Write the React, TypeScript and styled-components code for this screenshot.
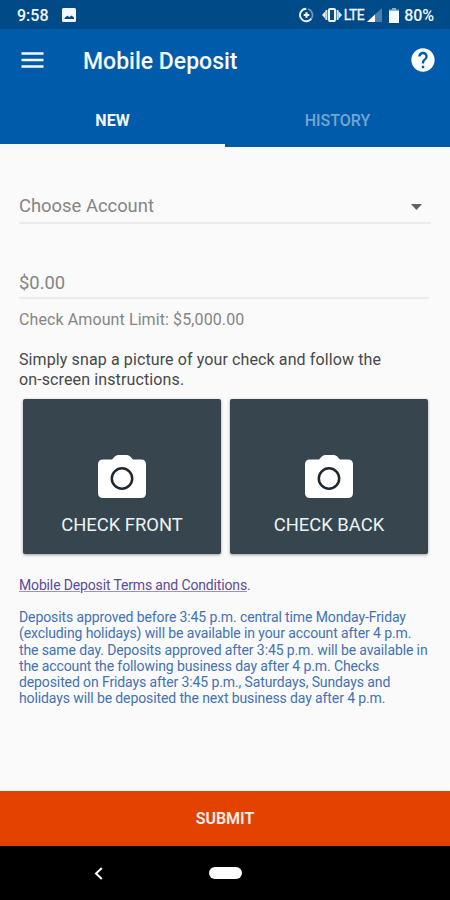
import React from "react";
import styled, { createGlobalStyle } from "styled-components";

const GlobalStyle = createGlobalStyle`
  * { box-sizing: border-box; }
  body { margin: 0; background: #fafafa; font-family: Roboto, "Liberation Sans", sans-serif; }
  button { font-family: inherit; border: 0; padding: 0; background: none; cursor: pointer; }
  svg { display: block; flex: none; }
`;

const Screen = styled.div`
  width: 450px;
  height: 900px;
  display: flex;
  flex-direction: column;
  overflow: hidden;
  background: #fafafa;
`;

const StatusBar = styled.div`
  height: 29px;
  flex: none;
  display: flex;
  align-items: center;
  padding: 1px 16px 0 17px;
  background: #004b87;
  color: #f3f8ff;
  font-size: 16px;
  font-weight: 500;
`;

const Clock = styled.span`
  width: 45px;
  letter-spacing: 0;
`;

const StatusIcons = styled.div`
  margin-left: auto;
  display: flex;
  align-items: center;
`;

const VibrateSlot = styled.span`
  margin-left: 8px;
`;

const Network = styled.span`
  margin: 0 3px 0 2px;
  font-size: 14px;
  font-weight: 400;
  letter-spacing: -0.5px;
  -webkit-text-stroke: 0.3px currentColor;
`;

const BatterySlot = styled.span`
  margin-left: 7px;
`;

const BatteryLevel = styled.span`
  margin-left: 5px;
  letter-spacing: -0.1px;
`;

const Header = styled.header`
  flex: none;
  height: 118px;
  background: #005cab;
  color: #f7faff;
  display: flex;
  flex-direction: column;
`;

const Toolbar = styled.div`
  height: 65px;
  display: flex;
  align-items: center;
  padding: 0 13px 3px 21px;
`;

const Title = styled.h1`
  margin: 3px auto 0 39px;
  font-size: 23px;
  line-height: 30px;
  font-weight: 500;
`;

const Tabs = styled.div`
  flex: 1;
  display: grid;
  grid-template-columns: 1fr 1fr;
`;

const Tab = styled.button<{ $active?: boolean }>`
  padding-top: 2px;
  font-size: 16px;
  font-weight: ${(p) => (p.$active ? 700 : 500)};
  color: ${(p) => (p.$active ? "#f3f8ff" : "#73a5d3")};
  border-bottom: 3px solid ${(p) => (p.$active ? "#f5f8fc" : "#005cab")};
`;

const Content = styled.main`
  flex: 1;
  display: flex;
  flex-direction: column;
  padding: 40px 21px 0 19px;
`;

const Field = styled.div<{ $wide?: boolean }>`
  height: ${(p) => (p.$wide ? 37 : 36)}px;
  margin-right: ${(p) => (p.$wide ? -2 : 0)}px;
  display: flex;
  align-items: center;
  justify-content: space-between;
  padding: ${(p) => (p.$wide ? 1 : 5)}px 9px 0 0;
  border-bottom: 2px solid #ebebeb;
  color: #858585;
  font-size: 18.4px;
`;

const DropdownArrow = styled.svg`
  margin-top: 3px;
`;

const FieldGap = styled.div`
  height: 39px;
`;

const Limit = styled.div`
  margin-top: 11px;
  font-size: 16px;
  line-height: 20px;
  letter-spacing: 0.1px;
  color: #858585;
`;

const Instructions = styled.p`
  margin: 20px 0 0;
  font-size: 16px;
  line-height: 20px;
  color: #484848;
`;

const Captures = styled.div`
  display: grid;
  grid-template-columns: 198px 198px;
  gap: 9px;
  margin: 9px 0 0 4px;
`;

const Capture = styled.button`
  height: 155px;
  display: flex;
  flex-direction: column;
  align-items: center;
  padding-top: 56px;
  border-radius: 2px;
  background: #37464e;
  box-shadow: 0 1px 3px rgba(0, 0, 0, 0.38);
  color: #edf3f5;
  font-size: 18.4px;
  line-height: 24px;
`;

const CaptureLabel = styled.span`
  margin-top: 15px;
`;

const Terms = styled.div`
  margin-top: 23px;
  font-size: 14px;
  line-height: 16px;
  letter-spacing: -0.15px;
  color: #5b4b9b;

  a {
    color: inherit;
    text-decoration: underline;
    text-decoration-color: #9a93c3;
  }
`;

const Notice = styled.p`
  margin: 16px 0 0;
  font-size: 14px;
  line-height: 16.3px;
  color: #4272b4;
`;

const Line = styled.span<{ $spacing: number }>`
  display: block;
  white-space: nowrap;
  letter-spacing: ${(p) => p.$spacing}px;
`;

const Submit = styled.button`
  flex: none;
  height: 55px;
  background: #e34200;
  color: #fff0ea;
  font-size: 16px;
  font-weight: 600;
  letter-spacing: -0.05px;
`;

const NavBar = styled.nav`
  flex: none;
  height: 54px;
  display: flex;
  align-items: center;
  background: #000;
`;

const BackIcon = styled.svg`
  margin-left: 94px;
`;

const HomePill = styled.span`
  width: 33px;
  height: 12px;
  margin-left: 106px;
  border-radius: 6px;
  background: #fff;
`;

const PictureIcon = () => (
  <svg width="14" height="14" viewBox="0 0 14 14">
    <path fill="#f3f8ff" fillRule="evenodd" d="M1.500 0h11Q14 0 14 1.500v11q0 1.500-1.500 1.500h-11Q0 14 0 12.500v-11Q0 0 1.500 0ZM2.500 11h9.500V9.500L9.500 7.500 7.500 9 5.200 7.800 2.500 10Z" />
  </svg>
);

const SyncIcon = () => (
  <svg width="15" height="16" viewBox="0 0 15 16" fill="none">
    <path d="M7.300 1.800A6.200 6.200 0 1 0 12.400 11.500" stroke="#eef5fc" strokeWidth="1.900" />
    <path d="M9 2a6.200 6.200 0 0 1 3.600 9.200" stroke="#6e99bf" strokeWidth="1.700" />
    <path d="M4.700 8h5.600M7.500 5.200v5.600" stroke="#f3f8ff" strokeWidth="2.200" />
  </svg>
);

const VibrateIcon = () => (
  <svg width="20" height="16" viewBox="0 0 20 16">
    <path d="M0 8 3.500 4v8ZM20 8l-3.500-4v8Z" fill="#e3edf7" />
    <path d="M4.400 3v10M15.600 3v10" stroke="#d3e1ef" strokeWidth="2" />
    <rect x="7" y="2" width="6" height="12" rx="1" fill="none" stroke="#f3f8ff" strokeWidth="2" />
  </svg>
);

const SignalIcon = () => (
  <svg width="15" height="14" viewBox="0 0 15 14">
    <path d="M15 0v14H0Z" fill="#4b80ae" />
    <path d="M8 6.500V14H0Z" fill="#fff" />
  </svg>
);

const BatteryIcon = () => (
  <svg width="10" height="15" viewBox="0 0 10 15">
    <path d="M3 0h4v1.500h3V4H0V1.500h3Z" fill="#8fb0cd" />
    <path d="M0 3h10v12H0Z" fill="#f7faff" />
  </svg>
);

const MenuIcon = () => (
  <svg width="23" height="18" viewBox="0 0 23 18">
    <path d="M.5 2.500h22M.5 9h22M.5 15.500h22" stroke="#f3f8ff" strokeWidth="2.700" />
  </svg>
);

const HelpIcon = () => (
  <svg width="28" height="28" viewBox="0 0 24 24">
    <path fill="#fff" d="M12 2C6.480 2 2 6.480 2 12s4.480 10 10 10 10-4.480 10-10S17.520 2 12 2zm1 17h-2v-2h2v2zm2.070-7.750-.9.920C13.450 12.900 13 13.500 13 15h-2v-.5c0-1.100.45-2.100 1.170-2.830l1.240-1.260c.37-.36.59-.86.59-1.410 0-1.100-.9-2-2-2s-2 .9-2 2H8c0-2.210 1.790-4 4-4s4 1.790 4 4c0 .88-.36 1.680-.93 2.250z" />
  </svg>
);

const CameraIcon = () => (
  <svg width="48" height="43" viewBox="0 0 48 43">
    <path fill="#fff" d="M5 4.500h9l2.800-3Q18.200 0 20 0h9q1.800 0 3.200 1.500L35 4.500h8q5 0 5 5V38q0 5-5 5H5q-5 0-5-5V9.500q0-5 5-5Z" />
    <circle cx="24" cy="23.500" r="10.200" fill="#fff" stroke="#20272e" strokeWidth="2.500" />
  </svg>
);

const notice = [
  "Deposits approved before 3:45 p.m. central time Monday-Friday",
  "(excluding holidays) will be available in your account after 4 p.m.",
  "the same day. Deposits approved after 3:45 p.m. will be available in",
  "the account the following business day after 4 p.m. Checks",
  "deposited on Fridays after 3:45 p.m., Saturdays, Sundays and",
  "holidays will be deposited the next business day after 4 p.m.",
];

export default function App() {
  return (
    <>
      <GlobalStyle />
      <Screen>
        <StatusBar>
          <Clock>9:58</Clock>
          <PictureIcon />
          <StatusIcons>
            <SyncIcon />
            <VibrateSlot><VibrateIcon /></VibrateSlot>
            <Network>LTE</Network>
            <SignalIcon />
            <BatterySlot><BatteryIcon /></BatterySlot>
            <BatteryLevel>80%</BatteryLevel>
          </StatusIcons>
        </StatusBar>
        <Header>
          <Toolbar>
            <MenuIcon />
            <Title>Mobile Deposit</Title>
            <HelpIcon />
          </Toolbar>
          <Tabs>
            <Tab $active>NEW</Tab>
            <Tab>HISTORY</Tab>
          </Tabs>
        </Header>
        <Content>
          <Field $wide>
            Choose Account
            <DropdownArrow width="11" height="6" viewBox="0 0 11 6">
              <path d="M0 0h11L5.500 6Z" fill="#5f6265" />
            </DropdownArrow>
          </Field>
          <FieldGap />
          <Field>$0.00</Field>
          <Limit>Check Amount Limit: $5,000.00</Limit>
          <Instructions>
            <Line $spacing={0.11}>Simply snap a picture of your check and follow the</Line>
            <Line $spacing={0.12}>on-screen instructions.</Line>
          </Instructions>
          <Captures>
            {["CHECK FRONT", "CHECK BACK"].map((label) => (
              <Capture key={label}>
                <CameraIcon />
                <CaptureLabel>{label}</CaptureLabel>
              </Capture>
            ))}
          </Captures>
          <Terms><a>Mobile Deposit Terms and Conditions</a>.</Terms>
          <Notice>
            {notice.map((text) => (
              <Line key={text} $spacing={-0.11}>{text}</Line>
            ))}
          </Notice>
        </Content>
        <Submit>SUBMIT</Submit>
        <NavBar>
          <BackIcon width="9" height="13" viewBox="0 0 9 13">
            <path d="M7.800 1 2 6.500 7.800 12" fill="none" stroke="#fff" strokeWidth="2" />
          </BackIcon>
          <HomePill />
        </NavBar>
      </Screen>
    </>
  );
}
